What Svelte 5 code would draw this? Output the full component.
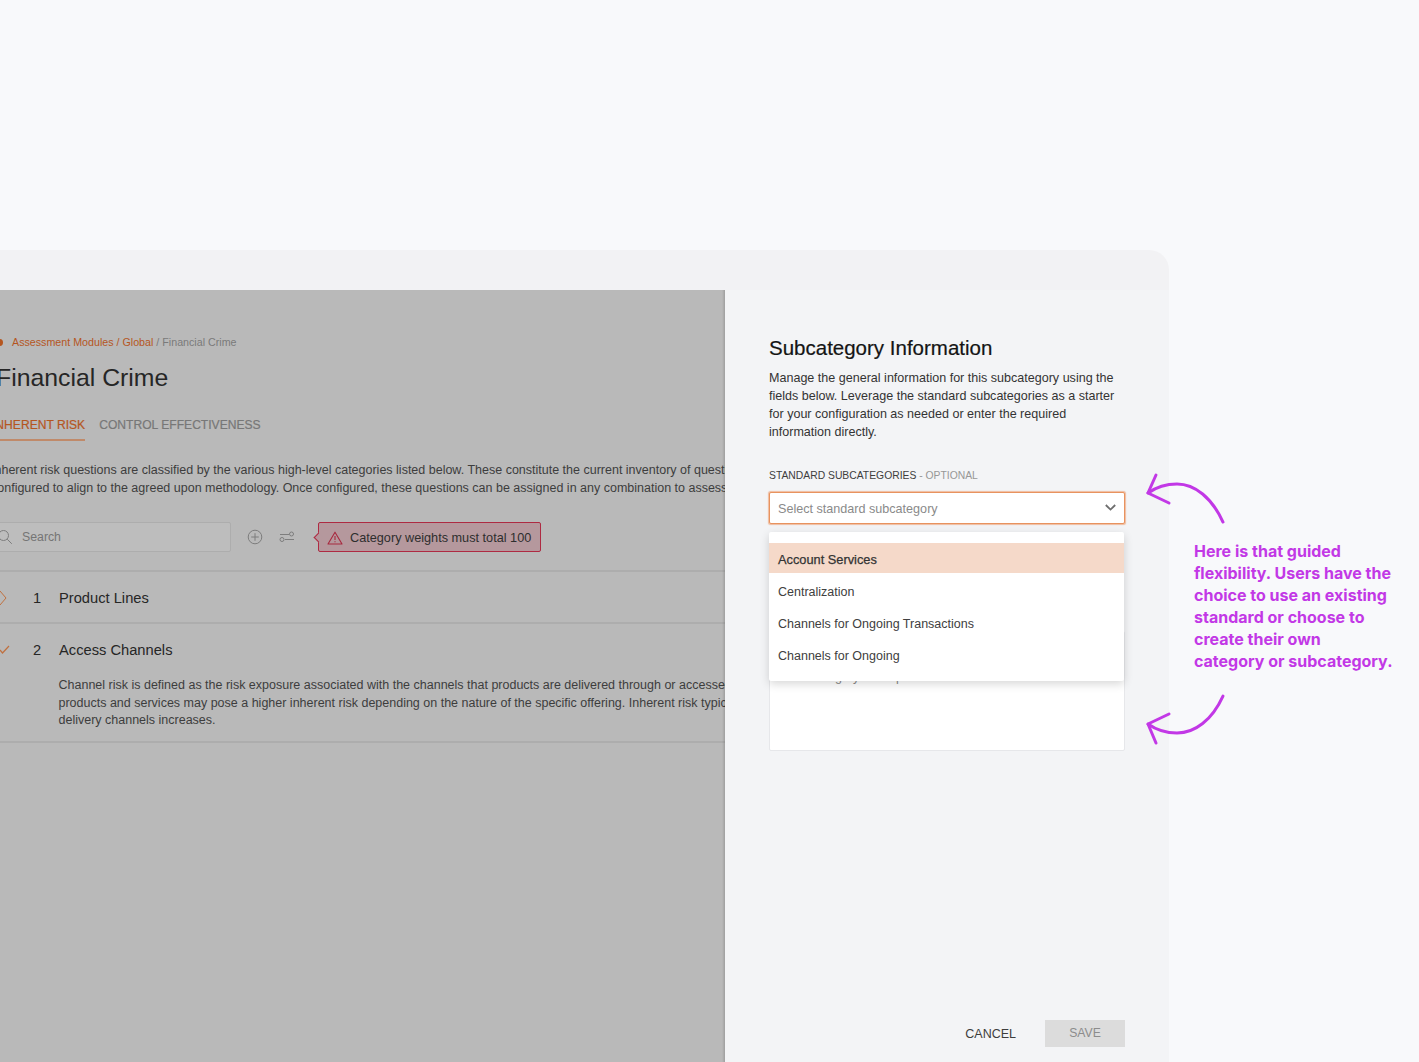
<script>
  const items = ["Account Services", "Centralization", "Channels for Ongoing Transactions", "Channels for Ongoing"]
</script>

<main class="page">
  <section class="window">
    <div class="titlebar"></div>
    <div class="body">
      <div class="pane">
        <div class="inner">
          <div class="crumbs">
            <span class="dot"></span>
            <span class="link">Assessment Modules / Global</span> / Financial Crime
          </div>
          <h1>Financial Crime</h1>
          <nav class="tabs">
            <span class="tab active">INHERENT RISK</span>
            <span class="tab">CONTROL EFFECTIVENESS</span>
          </nav>
          <p class="intro">Inherent risk questions are classified by the various high-level categories listed below. These constitute the current inventory of questions and can be<br />configured to align to the agreed upon methodology. Once configured, these questions can be assigned in any combination to assessments as needed.</p>
          <div class="toolbar">
            <div class="search">
              <svg width="16" height="16" viewBox="0 0 16 16" fill="none" stroke="#7d7d7d" stroke-width="1">
                <circle cx="6.5" cy="6.5" r="5" />
                <path d="M10.2 10.2l4.6 4.6" />
              </svg>
              <span>Search</span>
            </div>
            <svg class="tool" width="16" height="16" viewBox="0 0 16 16" fill="none" stroke="#7d7d7d" stroke-width="1">
              <circle cx="8" cy="8" r="6.8" />
              <path d="M8 4.2v7.6M4.2 8h7.6" />
            </svg>
            <svg class="tool" width="16" height="12" viewBox="0 0 16 12" fill="none" stroke="#7d7d7d" stroke-width="1">
              <path d="M1 3.5h9M6 8.5h9" />
              <circle cx="12.5" cy="3" r="2" />
              <circle cx="3" cy="8.5" r="2" />
            </svg>
            <div class="alert">
              <svg width="16" height="14" viewBox="0 0 16 14" fill="none" stroke="#a8283e" stroke-width="1.1">
                <path d="M8 1.2L15 13H1z" stroke-linejoin="round" />
                <path d="M8 5v4M8 10.2v1" />
              </svg>
              <span>Category weights must total 100</span>
            </div>
          </div>
          <div class="row first">
            <svg class="mark" height="16" viewBox="0 0 10 16" preserveAspectRatio="xMinYMid" fill="none" stroke="#c0703f" stroke-width="1">
              <path d="M2 1l6 7-6 7" />
            </svg>
            <span class="num">1</span>
            <span class="name">Product Lines</span>
          </div>
          <div class="row open">
            <div class="head">
              <svg class="mark" height="10" viewBox="0 0 12 10" preserveAspectRatio="xMinYMid" fill="none" stroke="#c0703f" stroke-width="1.2">
                <path d="M2 5l2.500 3 6.500-7" />
              </svg>
              <span class="num">2</span>
              <span class="name">Access Channels</span>
            </div>
            <p>Channel risk is defined as the risk exposure associated with the channels that products are delivered through or accessed by. Certain<br />products and services may pose a higher inherent risk depending on the nature of the specific offering. Inherent risk typically rises as<br />delivery channels increases.</p>
          </div>
        </div>
      </div>

      <aside class="panel">
        <h2>Subcategory Information</h2>
        <p class="lead">Manage the general information for this subcategory using the fields below. Leverage the standard subcategories as a starter for your configuration as needed or enter the required information directly.</p>
        <div class="label">STANDARD SUBCATEGORIES <span>- OPTIONAL</span></div>
        <div class="field">
          <div class="select">
            <span>Select standard subcategory</span>
            <svg class="chev" width="11" height="7" viewBox="0 0 11 7" fill="none" stroke="#6f6f6f" stroke-width="1.8">
              <path d="M.8 1l4.700 4.600L10.200 1" />
            </svg>
          </div>
          <ul class="menu">
            {#each items as item, i}
              <li class:hot={i === 0}>{item}</li>
            {/each}
          </ul>
        </div>
        <div class="textarea">Enter category description</div>
        <div class="actions">
          <span class="cancel">CANCEL</span>
          <span class="save">SAVE</span>
        </div>
      </aside>
    </div>
  </section>

  <p class="note">Here is that guided flexibility. Users have the choice to use an existing standard or choose to create their own<br />category or subcategory.</p>

  <svg class="arrows" width="90" height="280" viewBox="1140 470 90 280" fill="none" stroke="#c238e6" stroke-width="3" stroke-linecap="round" stroke-linejoin="round">
    <path d="M1223 522C1212 498 1195 484 1177 484C1165 484 1155 488 1148 493" />
    <path d="M1156 475L1148 493L1169 503" />
    <path d="M1223 696C1212 720 1195 733 1177 733C1165 733 1155 729 1148 724" />
    <path d="M1169 714L1148 724L1156 743" />
  </svg>
</main>

<style>
  :global(body) {
    margin: 0;
    background: #f8f9fb;
  }

  .page {
    position: relative;
    height: 1062px;
    padding-top: 250px;
    box-sizing: border-box;
    overflow: hidden;
    font-family: "Liberation Sans", Arial, sans-serif;
    display: flex;
  }

  .window {
    width: 1169px;
    height: 812px;
    display: flex;
    flex-direction: column;
    border-top-right-radius: 20px;
    overflow: hidden;
    flex: none;
  }

  .titlebar {
    height: 40px;
    background: #f2f2f4;
    flex: none;
  }

  .body {
    flex: 1;
    display: flex;
  }

  .pane {
    position: relative;
    width: 725px;
    flex: none;
    background: #b9b9b9;
    overflow: hidden;
  }

  /* soft edge where the side panel sits on the page */
  .pane::after {
    content: "";
    position: absolute;
    top: 0;
    right: 0;
    bottom: 0;
    width: 3px;
    background: linear-gradient(to right, rgba(0, 0, 0, 0), rgba(0, 0, 0, 0.14));
  }

  .inner {
    width: 1000px;
    margin-left: -7px;
    padding-top: 45px;
  }

  .crumbs {
    font-size: 10.7px;
    line-height: 14px;
    color: #7a7a7a;
    padding-left: 19px;
    position: relative;
  }

  .dot {
    position: absolute;
    left: 3px;
    top: 4px;
    width: 7px;
    height: 7px;
    border-radius: 50%;
    background: #b5561f;
  }

  .link {
    color: #b5561f;
  }

  h1 {
    margin: 13px 0 0 3px;
    font-size: 24.8px;
    line-height: 32px;
    font-weight: 400;
    color: #262626;
  }

  .tabs {
    display: flex;
    gap: 14px;
    margin: 23px 0 0 -1px;
    width: 400px;
  }

  .tab {
    font-size: 12.1px;
    line-height: 16px;
    padding-bottom: 6px;
    color: #777;
    -webkit-text-stroke: 0.2px currentColor;
  }

  .active {
    color: #b5561f;
    border-bottom: 2px solid #c08a6a;
  }

  .intro {
    margin: 20px 0 0 -2px;
    font-size: 12.5px;
    line-height: 18px;
    color: #3d3d3d;
    white-space: nowrap;
  }

  .toolbar {
    display: flex;
    align-items: center;
    margin-top: 25px;
    height: 30px;
  }

  .search {
    width: 238px;
    height: 30px;
    box-sizing: border-box;
    border: 1px solid #adadad;
    background: #bdbdbd;
    border-radius: 2px;
    display: flex;
    align-items: center;
    gap: 9px;
    font-size: 12.3px;
    color: #757575;
    padding-left: 3px;
  }

  .tool {
    margin-left: 16px;
    flex: none;
  }

  .alert {
    position: relative;
    margin-left: 23px;
    width: 223px;
    height: 30px;
    box-sizing: border-box;
    background: #b5989d;
    border: 1px solid #ae2a42;
    border-radius: 2px;
    display: flex;
    align-items: center;
    gap: 7px;
    padding: 1px 0 0 8px;
    font-size: 12.7px;
    color: #2e2e2e;
  }

  .alert::before {
    content: "";
    position: absolute;
    left: -4px;
    top: 11px;
    width: 6px;
    height: 6px;
    background: #b5989d;
    border-left: 1px solid #ae2a42;
    border-bottom: 1px solid #ae2a42;
    transform: rotate(45deg);
  }

  .row {
    border-top: 2px solid #adadad;
    font-size: 14.7px;
    color: #262626;
  }

  .row.first {
    margin-top: 18px;
    height: 49px;
    padding-top: 1px;
    display: flex;
    align-items: center;
  }

  .row.open {
    height: 117px;
    border-bottom: 2px solid #adadad;
  }

  .head {
    display: flex;
    align-items: center;
    height: 52px;
    margin-bottom: 1px;
  }

  .mark {
    flex: none;
    box-sizing: border-box;
    width: 40px;
    padding-left: 5px;
  }

  .num {
    width: 26px;
    flex: none;
  }

  .row p {
    margin: 0 0 0 65.5px;
    font-size: 12.5px;
    line-height: 17.5px;
    color: #3d3d3d;
    white-space: nowrap;
  }

  .panel {
    flex: 1;
    background: #f3f4f6;
    box-sizing: border-box;
    padding: 44px 44px 0;
    display: flex;
    flex-direction: column;
    position: relative;
  }

  h2 {
    margin: 0;
    font-size: 20.5px;
    line-height: 28px;
    font-weight: 400;
    color: #141414;
    -webkit-text-stroke: 0.2px currentColor;
  }

  .lead {
    margin: 7px 0 0;
    font-size: 12.55px;
    line-height: 18px;
    color: #333;
  }

  .label {
    margin-top: 28px;
    font-size: 10.35px;
    line-height: 14px;
    color: #3d3d3d;
  }

  .label span {
    color: #979797;
  }

  .field {
    position: relative;
    margin-top: 9px;
  }

  .select {
    height: 32px;
    box-sizing: border-box;
    background: #fff;
    border: 1px solid #e8935f;
    box-shadow: 0 0 1px 0.5px rgba(236, 150, 100, 0.6);
    border-radius: 2px;
    display: flex;
    align-items: center;
    justify-content: space-between;
    padding: 1px 8px 0 8px;
    font-size: 12.6px;
    color: #8a8a8a;
  }

  .chev {
    margin-top: -2px;
  }

  .menu {
    position: absolute;
    z-index: 2;
    top: 40px;
    left: 0;
    right: 1px;
    margin: 0;
    padding: 11px 0 10px;
    list-style: none;
    background: #fff;
    border-radius: 2px;
    box-shadow: 0 3px 10px rgba(0, 0, 0, 0.16);
    font-size: 12.5px;
    color: #404040;
  }

  .menu li {
    height: 32px;
    line-height: 34px;
    padding-left: 9px;
  }

  .menu .hot {
    height: 30px;
    margin-bottom: 2px;
    background: #f5d9c9;
    font-size: 12.8px;
    -webkit-text-stroke: 0.25px currentColor;
    color: #333;
  }

  .textarea {
    margin-top: 107px;
    height: 120px;
    box-sizing: border-box;
    background: #fff;
    border: 1px solid #e6e7ea;
    border-radius: 2px;
    padding: 36px 9px 0 8px;
    font-size: 12.5px;
    line-height: 18px;
    color: #8a8a8a;
  }

  .actions {
    margin-top: auto;
    margin-bottom: 15px;
    display: flex;
    justify-content: flex-end;
    align-items: center;
    gap: 29px;
    font-size: 12.5px;
  }

  .cancel {
    color: #3d3d3d;
  }

  .save {
    width: 80px;
    height: 27px;
    line-height: 27px;
    text-align: center;
    background: #dcdcdc;
    font-size: 12.2px;
    color: #8c8c8c;
  }

  .note {
    margin: 290px 0 0 25px;
    width: 205px;
    font-family: Inter, sans-serif;
    font-size: 16px;
    line-height: 22px;
    font-weight: 700;
    color: #c238e6;
    flex: none;
  }

  .arrows {
    position: absolute;
    left: 1140px;
    top: 470px;
  }
</style>
